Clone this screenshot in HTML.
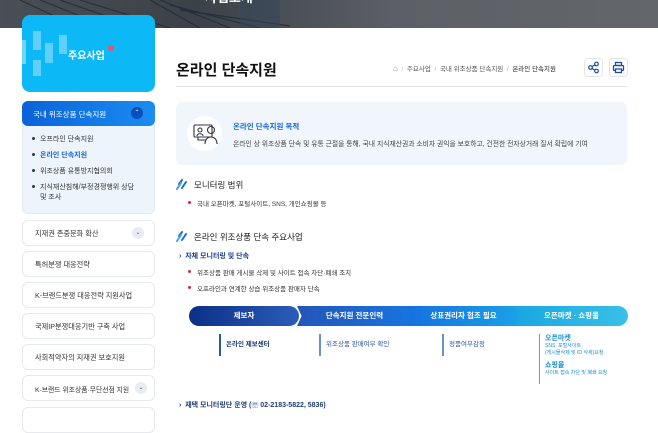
<!DOCTYPE html>
<html><head><meta charset="utf-8"><style>
*{margin:0;padding:0;box-sizing:border-box}
body{width:658px;height:414px;overflow:hidden;background:#fff;font-family:"Liberation Sans","Noto Sans CJK KR",sans-serif;color:#222;position:relative}
.a{position:absolute}
.banner{left:0;top:0;width:658px;height:28px;background:linear-gradient(90deg,#4a4f55 0%,#3c4148 30%,#5c6066 60%,#63666a 100%);overflow:hidden}
.side{left:22px;top:15px;width:133px;height:77px;background:#0cb8f6;border-radius:8px;overflow:hidden}
.menu{left:22px;width:133px;height:26px;border:1px solid #e6e9ee;border-radius:6px;font-size:7.2px;color:#333;padding:8px 0 0 12px;white-space:nowrap}
.chev{position:absolute;right:10px;top:6px;width:12px;height:12px;border-radius:50%;background:#e9ecf1;font-size:6px;text-align:center;line-height:12px;color:#555}
.sub{font-size:7px;color:#333}
.sub div{position:relative;padding-left:10px;margin-bottom:6px}
.sub div:before{content:"";position:absolute;left:2px;top:3px;width:3px;height:3px;border-radius:50%;background:#1b3c78}
.red div{position:relative;padding-left:10px;font-size:6.5px;color:#333}
.red div:before{content:"";position:absolute;left:1px;top:3px;width:3px;height:3px;border-radius:50%;background:#e0224b}
.h{font-size:8.5px;color:#222;padding-left:18px}
.ic{position:absolute;left:0;top:0}
.flow{top:306px;height:20px;color:#fff;font-size:7.5px;font-weight:bold;text-align:center;line-height:20px}
.vl{border-left:2px solid #2c56a8;padding-left:5px;font-size:6.5px;color:#1b3c78;font-weight:bold}
</style></head><body>
<div class="a banner">
<svg width="658" height="28" class="a" style="left:0;top:0"><g stroke="#1e2a3a" stroke-width="1.2" opacity=".8"><line x1="20" y1="0" x2="80" y2="28"/><line x1="40" y1="0" x2="110" y2="28"/><line x1="60" y1="0" x2="140" y2="28"/><line x1="80" y1="0" x2="170" y2="28"/><line x1="150" y1="0" x2="200" y2="28"/><line x1="160" y1="0" x2="230" y2="28"/><line x1="170" y1="5" x2="260" y2="28"/><line x1="180" y1="10" x2="290" y2="26"/></g><rect x="240" y="0" width="40" height="28" fill="#34465a" opacity=".5"/></svg>
<div class="a" style="left:205px;top:-13px;color:#fff;font-size:13px;font-weight:bold">사업소개</div>
</div>
<div class="a side">
<div class="a" style="left:0;top:25px;width:4px;height:24px;background:#6fd4fb"></div>
<div class="a" style="left:11px;top:16px;width:8px;height:19px;background:#5ed0fb"></div>
<div class="a" style="left:11px;top:45px;width:8px;height:16px;background:#5ed0fb"></div>
<div class="a" style="left:23px;top:28px;width:8px;height:20px;background:#5ed0fb"></div>
<div class="a" style="left:37px;top:20px;width:8px;height:19px;background:#5ed0fb"></div>
<div class="a" style="left:46px;top:32px;color:#fff;font-size:10px;font-weight:bold">주요사업</div>
<div class="a" style="left:86px;top:30px;width:6px;height:6px;border-radius:50%;background:#f0506e"></div>
</div>
<div class="a" style="left:22px;top:101px;width:133px;height:113px;background:#eef4fc;border-radius:6px;border:1px solid #e3eaf4"></div>
<div class="a" style="left:22px;top:101px;width:133px;height:25px;background:linear-gradient(90deg,#0b62d9,#1a8df0);border-radius:6px;color:#fff;font-size:7.5px;padding:8px 0 0 11px">국내 위조상품 단속지원
<div style="position:absolute;right:12px;top:6px;width:12px;height:12px;border-radius:50%;background:#0a4fc0;font-size:6px;text-align:center;line-height:12px">⌃</div></div>
<div class="a sub" style="left:30px;top:134px;width:120px">
<div>오프라인 단속지원</div><div style="color:#1467d6;font-weight:bold">온라인 단속지원</div><div>위조상품 유통방지협의회</div><div>지식재산침해/부정경쟁행위 상담<br>및 조사</div></div>
<div class="a menu" style="top:220px">지재권 존중문화 확산<span class="chev">⌄</span></div>
<div class="a menu" style="top:251px">특허분쟁 대응전략</div>
<div class="a menu" style="top:282px">K-브랜드분쟁 대응전략 지원사업</div>
<div class="a menu" style="top:313px">국제IP분쟁대응기반 구축 사업</div>
<div class="a menu" style="top:344px">사회적약자의 지재권 보호지원</div>
<div class="a menu" style="top:375px;font-size:6.8px">K-브랜드 위조상품·무단선점 지원<span class="chev" style="right:7px">⌄</span></div>
<div class="a menu" style="top:407px"></div>

<div class="a" style="left:176px;top:59px;font-size:15px;font-weight:bold;color:#111">온라인 단속지원</div>
<div class="a" style="left:176px;top:86px;width:451px;height:1px;background:#e2e4e8"></div>
<div class="a" style="left:393px;top:63px;font-size:6.5px;color:#555;white-space:nowrap"><span style="color:#888;font-size:8px">⌂</span>&nbsp; <span style="color:#bbb">/</span>&nbsp; 주요사업&nbsp; <span style="color:#bbb">/</span>&nbsp; 국내 위조상품 단속지원&nbsp; <span style="color:#bbb">/</span>&nbsp; <span style="color:#222">온라인 단속지원</span></div>
<div class="a" style="left:584px;top:58px;width:19px;height:19px;border:1px solid #e2e5ea;border-radius:4px"><svg width="17" height="17" viewBox="0 0 17 17"><g fill="none" stroke="#1d4f9c" stroke-width="1.2"><circle cx="5.5" cy="8.5" r="1.8"/><circle cx="11.5" cy="5" r="1.8"/><circle cx="11.5" cy="12" r="1.8"/><path d="M7 7.6L10 5.8M7 9.4L10 11.2"/></g></svg></div>
<div class="a" style="left:609px;top:58px;width:19px;height:19px;border:1px solid #e2e5ea;border-radius:4px"><svg width="17" height="17" viewBox="0 0 17 17"><g fill="none" stroke="#1d4f9c" stroke-width="1.3"><rect x="5.5" y="3.5" width="6" height="3"/><rect x="3.5" y="6.5" width="10" height="5" rx="1"/><rect x="5.5" y="10" width="6" height="3.5" fill="#fff"/></g></svg></div>

<div class="a" style="left:176px;top:102px;width:451px;height:63px;background:#f1f6fd;border-radius:6px"></div>
<div class="a" style="left:187px;top:116px;width:35px;height:35px;border-radius:50%;background:#fff"><svg width="35" height="35" viewBox="0 0 35 35"><g fill="none" stroke="#334" stroke-width="1.1"><rect x="7" y="9" width="18" height="12" rx="1"/><circle cx="13" cy="14" r="2"/><path d="M10 20c0-3 6-3 6 0"/><circle cx="24" cy="14" r="3.5"/><path d="M18 28c0-5 3-7 6-7s6 2 6 7"/><path d="M11 21v3h8"/></g></svg></div>
<div class="a" style="left:233px;top:121px;font-size:7.5px;font-weight:bold;color:#1467d6">온라인 단속지원 목적</div>
<div class="a" style="left:233px;top:138px;font-size:6.8px;color:#444;white-space:nowrap">온라인 상 위조상품 단속 및 유통 근절을 통해, 국내 지식재산권과 소비자 권익을 보호하고, 건전한 전자상거래 질서 확립에 기여</div>

<div class="a h" style="left:176px;top:179px"><svg class="ic" width="12" height="11" viewBox="0 0 12 11"><g stroke-width="2" stroke-linecap="round"><path d="M3 5L6 1" stroke="#1a6fd6"/><path d="M1 10L5 4" stroke="#4aa0ea"/><path d="M6 9L10 3" stroke="#1a6fd6"/></g></svg>모니터링 범위</div>
<div class="a red" style="left:187px;top:198px"><div>국내 오픈마켓, 포털사이트, SNS, 개인쇼핑몰 등</div></div>
<div class="a h" style="left:176px;top:231px"><svg class="ic" width="12" height="11" viewBox="0 0 12 11"><g stroke-width="2" stroke-linecap="round"><path d="M3 5L6 1" stroke="#1a6fd6"/><path d="M1 10L5 4" stroke="#4aa0ea"/><path d="M6 9L10 3" stroke="#1a6fd6"/></g></svg>온라인 위조상품 단속 주요사업</div>
<div class="a" style="left:179px;top:251px;font-size:7px;color:#1b3c9c;font-weight:bold">›&nbsp; <span>자체 모니터링 및 단속</span></div>
<div class="a red" style="left:187px;top:267px"><div>위조상품 판매 게시물 삭제 및 사이트 접속 차단·폐쇄 조치</div></div>
<div class="a red" style="left:187px;top:283px"><div>오프라인과 연계한 상습 위조상품 판매자 단속</div></div>

<div class="a" style="left:189px;top:306px;width:110px;height:20px;border-radius:10px;background:linear-gradient(90deg,#0d2f86,#2a5db8)"></div>
<div class="a flow" style="left:189px;width:110px">제보자</div>
<div class="a flow" style="left:297px;width:115px;background:linear-gradient(90deg,#2455b8,#1874e0);clip-path:polygon(0 0,95% 0,100% 50%,95% 100%,0 100%,4% 50%)">단속지원 전문인력</div>
<div class="a flow" style="left:406px;width:115px;background:linear-gradient(90deg,#1570e0,#1aa2e6);clip-path:polygon(0 0,95% 0,100% 50%,95% 100%,0 100%,4% 50%)">상표권리자 협조 필요</div>
<div class="a flow" style="left:515px;width:113px;background:linear-gradient(90deg,#1aa6e2,#39c0e8);border-radius:0 10px 10px 0;clip-path:polygon(0 0,100% 0,100% 100%,0 100%,4% 50%)">오픈마켓 · 쇼핑몰</div>

<div class="a vl" style="left:219px;top:334px;height:22px;line-height:22px">온라인 제보센터</div>
<div class="a vl" style="left:319px;top:334px;height:22px;line-height:22px;font-weight:normal;color:#2c56a8;border-color:#6a8fd0">위조상품 판매여부 확인</div>
<div class="a vl" style="left:442px;top:334px;height:22px;line-height:22px;font-weight:normal;color:#2c56a8;border-color:#6a8fd0">정품여부감정</div>
<div class="a" style="left:539px;top:334px;border-left:1px solid #39b0e0;padding-left:5px;height:50px;color:#1a8fd0;font-size:5px;line-height:1.35">
<div style="font-size:7px;font-weight:bold">오픈마켓</div><div>SNS, 포털사이트</div><div>(게시물삭제 및 ID 삭제)요청</div>
<div style="font-size:7px;font-weight:bold;margin-top:4px">쇼핑몰</div><div>사이트 접속 차단 및 폐쇄 요청</div></div>
<div class="a" style="left:179px;top:400px;font-size:7px;color:#1b3c78;font-weight:bold">›&nbsp; 재택 모니터링단 운영 (☏ 02-2183-5822, 5836)</div>
</body></html>
